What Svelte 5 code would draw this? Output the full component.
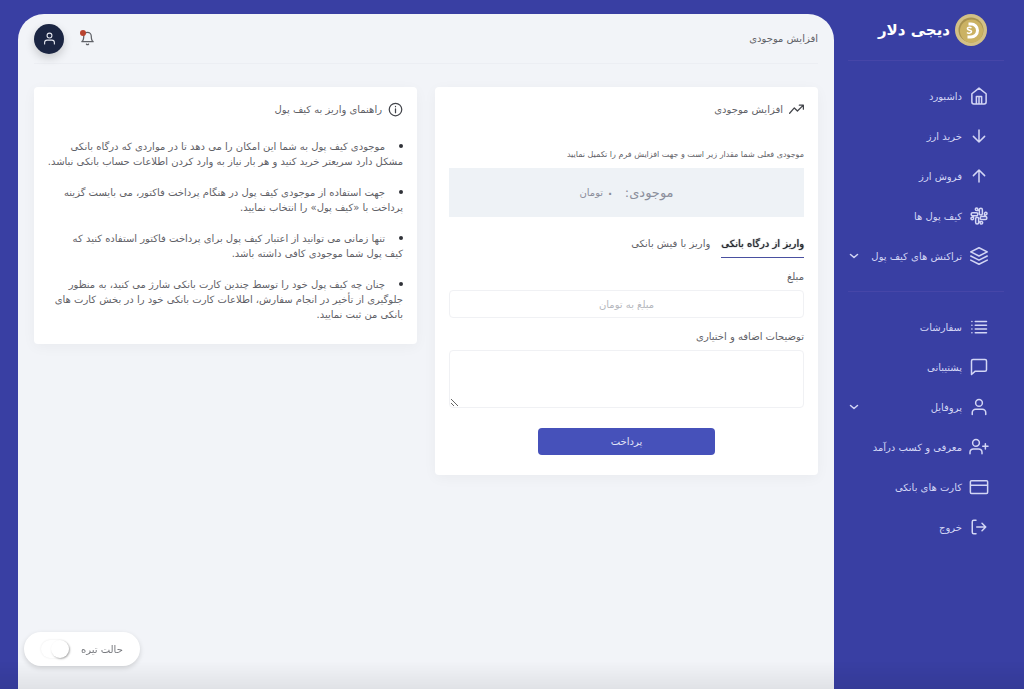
<script lang="ts">
	type Item = { icon: string; label: string; sub?: boolean };

	const walletLinks: Item[] = [
		{ icon: 'home', label: 'داشبورد' },
		{ icon: 'down', label: 'خرید ارز' },
		{ icon: 'up', label: 'فروش ارز' },
		{ icon: 'slack', label: 'کیف پول ها' },
		{ icon: 'layers', label: 'تراکنش های کیف پول', sub: true }
	];

	const accountLinks: Item[] = [
		{ icon: 'list', label: 'سفارشات' },
		{ icon: 'message', label: 'پشتیبانی' },
		{ icon: 'user', label: 'پروفایل', sub: true },
		{ icon: 'userPlus', label: 'معرفی و کسب درآمد' },
		{ icon: 'card', label: 'کارت های بانکی' },
		{ icon: 'logout', label: 'خروج' }
	];

	const paths: Record<string, string> = {
		home: 'M2.5 9 12 1.500 21.500 9V20a2.500 2.500 0 0 1-2.500 2.500H5A2.500 2.500 0 0 1 2.500 20zM8.500 22.500V12.500h7v10M12 13v9',
		down: 'M12 4v16M4.500 12.500l7.500 7.500 7.500-7.500',
		up: 'M12 20V4M4.500 11.500 12 4l7.500 7.500',
		slack:
			'M14.500 10.500a2 2 0 0 1-2-2v-5a2 2 0 0 1 4 0v5a2 2 0 0 1-2 2zM21 10.500h-1.700V8.800A1.700 1.700 0 1 1 21 10.500zM9.500 13.500a2 2 0 0 1 2 2v5a2 2 0 0 1-4 0v-5a2 2 0 0 1 2-2zM3 13.500h1.700v1.700A1.700 1.700 0 1 1 3 13.500zM13.500 14.500a2 2 0 0 1 2-2h5a2 2 0 0 1 0 4h-5a2 2 0 0 1-2-2zM15.200 19.300h-1.700V21a1.700 1.700 0 1 0 1.700-1.700zM10.500 9.500a2 2 0 0 1-2 2h-5a2 2 0 0 1 0-4h5a2 2 0 0 1 2 2zM8.800 4.700h1.700V3a1.700 1.700 0 1 0-1.700 1.700z',
		layers: 'M12 1 1 6.500 12 12l11-5.500zM1 17.500 12 23l11-5.500M1 12l11 5.500L23 12',
		list: 'M7 4.500h15M7 9.500h15M7 14.500h15M7 19.500h15M2.500 4.500h.1M2.500 9.500h.1M2.500 14.500h.1M2.500 19.500h.1',
		message: 'M22 15.500a2 2 0 0 1-2 2H7l-5 4.500V4a2 2 0 0 1 2-2h16a2 2 0 0 1 2 2z',
		user: 'M21 22v-2.500a4.500 4.500 0 0 0-4.500-4.500h-9A4.500 4.500 0 0 0 3 19.500V22M16.500 6.500a4.500 4.500 0 1 1-9 0 4.500 4.500 0 0 1 9 0z',
		userPlus:
			'M16 21v-2a4.500 4.500 0 0 0-4.500-4.500h-7A4.500 4.500 0 0 0 0 19v2M12.500 6.500a4.500 4.500 0 1 1-9 0 4.500 4.500 0 0 1 9 0zM20.500 7.500v7M17 11h7',
		card: 'M2 3.500h20A1.500 1.500 0 0 1 23.500 5v14a1.500 1.500 0 0 1-1.500 1.500H2A1.500 1.500 0 0 1 .5 19V5A1.500 1.500 0 0 1 2 3.500zM.5 9.500h23',
		logout: 'M8 3H5a2 2 0 0 0-2 2v14a2 2 0 0 0 2 2h3M16 17l5-5-5-5M21 12H9',
		chevron: 'm5 9 7 6 7-6',
		bell: 'M18 8A6 6 0 0 0 6 8c0 7-3 9-3 9h18s-3-2-3-9M13.700 21a2 2 0 0 1-3.400 0',
		trend: 'm23 5-9.500 9.500-5-5L1 18M16.500 5H23v6.500',
		info: 'M22 12a10 10 0 1 1-20 0 10 10 0 0 1 20 0zM12 17v-6M12 7.500V7'
	};

	const tips = [
		'موجودی کیف پول به شما این امکان را می دهد تا در مواردی که درگاه بانکی مشکل\u00a0دارد سریعتر خرید کنید و هر بار نیاز به وارد کردن اطلاعات حساب بانکی نباشد.',
		'جهت استفاده از موجودی کیف پول در هنگام پرداخت فاکتور، می بایست گزینه پرداخت\u00a0با «کیف پول» را انتخاب نمایید.',
		'تنها زمانی می توانید از اعتبار کیف پول برای پرداخت فاکتور استفاده کنید که کیف\u00a0پول شما موجودی کافی داشته باشد.',
		'چنان چه کیف پول خود را توسط چندین کارت بانکی شارژ می کنید، به منظور جلوگیری\u00a0از تأخیر در انجام سفارش، اطلاعات کارت بانکی خود را در بخش کارت های بانکی\u00a0من ثبت نمایید.'
	];

	let tab = $state('gateway');
	let amount = $state('');
	let note = $state('');
	let dark = $state(false);
</script>

{#snippet icon(name: string)}
	<svg class="icon" viewBox="0 0 24 24" aria-hidden="true"><path d={paths[name]} /></svg>
{/snippet}

{#snippet menu(items: Item[])}
	<ul class="menu">
		{#each items as item}
			<li>
				<a href="#top">
					{@render icon(item.icon)}
					<span>{item.label}</span>
					{#if item.sub}
						<span class="chevron">{@render icon('chevron')}</span>
					{/if}
				</a>
			</li>
		{/each}
	</ul>
{/snippet}

<div class="app" dir="rtl" lang="fa">
	<aside>
		<a class="brand" href="#top">
			<svg class="coin" viewBox="0 0 32 32" aria-hidden="true">
				<circle cx="16" cy="16" r="16" fill="#d3c086" />
				<circle cx="16" cy="16" r="12.500" fill="#a8924f" />
				<circle cx="16.500" cy="17" r="11.500" fill="#cbb263" />
				<path d="M13.500 10h2.500a6.500 6.500 0 0 1 0 13h-3.500" fill="none" stroke="#fff" stroke-width="3" />
				<path
					d="M16.500 14c-2-1.500-4.500-.5-4 1s4 1 4 2.500-3 2.500-4.500 1"
					fill="none"
					stroke="#fff"
					stroke-width="1.500"
				/>
			</svg>
			<span>دیجی دلار</span>
		</a>
		<nav>
			{@render menu(walletLinks)}
			{@render menu(accountLinks)}
		</nav>
	</aside>

	<main>
		<header>
			<h1>افزایش موجودی</h1>
			<div class="actions">
				<button type="button" class="bell" aria-label="اعلان ها">{@render icon('bell')}</button>
				<button type="button" class="avatar" aria-label="حساب کاربری">{@render icon('user')}</button>
			</div>
		</header>

		<div class="columns">
			<section class="card">
				<h2>{@render icon('trend')} افزایش موجودی</h2>
				<p class="lead">موجودی فعلی شما مقدار زیر است و جهت افزایش فرم را تکمیل نمایید</p>
				<div class="balance">
					<strong>موجودی:</strong>
					<span class="sum"><b>۰</b> تومان</span>
				</div>
				<div class="tabs">
					<button type="button" class:active={tab === 'gateway'} onclick={() => (tab = 'gateway')}>
						واریز از درگاه بانکی
					</button>
					<button type="button" class:active={tab === 'receipt'} onclick={() => (tab = 'receipt')}>
						واریز با فیش بانکی
					</button>
				</div>
				<form onsubmit={(e) => e.preventDefault()}>
					<label for="amount">مبلغ</label>
					<input id="amount" type="text" placeholder="مبلغ به تومان" bind:value={amount} />
					<label for="note">توضیحات اضافه و اختیاری</label>
					<textarea id="note" bind:value={note}></textarea>
					<button type="submit" class="pay">پرداخت</button>
				</form>
			</section>

			<section class="card guide">
				<h2>{@render icon('info')} راهنمای واریز به کیف پول</h2>
				<ul>
					{#each tips as tip}
						<li>{tip}</li>
					{/each}
				</ul>
			</section>
		</div>
	</main>

	<div class="shade"></div>
	<label class="dark-mode">
		<span>حالت تیره</span>
		<input type="checkbox" bind:checked={dark} />
	</label>
</div>

<style>
	:global(body) {
		background: #393fa3;
	}

	.app {
		display: flex;
		min-height: 100vh;
		font-family: 'DejaVu Sans', sans-serif;
		font-size: 10px;
		color: #5f6167;
	}

	.app * {
		box-sizing: border-box;
	}

	button,
	input,
	textarea {
		font: inherit;
		color: inherit;
	}

	button {
		border: 0;
		padding: 0;
		background: none;
		cursor: pointer;
	}

	.icon {
		display: block;
		flex: none;
		width: 18px;
		height: 18px;
		fill: none;
		stroke: currentColor;
		stroke-width: 2;
		stroke-linecap: round;
		stroke-linejoin: round;
		overflow: visible;
	}

	aside {
		flex: none;
		width: 190px;
		padding: 0 20px 0 14px;
		color: #d3d6f5;
	}

	.brand {
		display: flex;
		align-items: center;
		gap: 5px;
		height: 61px;
		padding: 0 17px;
		border-bottom: 1px solid #4646a8;
		color: #fff;
		font-size: 15px;
		font-weight: 700;
		white-space: nowrap;
		text-decoration: none;
	}

	.coin {
		flex: none;
		width: 32px;
		height: 32px;
	}

	.menu {
		list-style: none;
		margin: 0;
		padding: 15px 16px 0 0;
	}

	.menu + .menu {
		margin-top: 15px;
		border-top: 1px solid #4646a8;
	}

	.menu a {
		display: flex;
		align-items: center;
		gap: 8px;
		height: 40px;
		color: inherit;
		text-decoration: none;
		white-space: nowrap;
	}

	.chevron {
		margin-right: auto;
	}

	.chevron .icon {
		width: 12px;
		height: 12px;
		stroke-width: 3;
	}

	main {
		flex: 1;
		min-width: 0;
		margin: 14px 0 0 18px;
		padding: 0 16px;
		border-radius: 26px 26px 0 0;
		background: #f2f4f8;
	}

	header {
		display: flex;
		align-items: center;
		justify-content: space-between;
		height: 50px;
		border-bottom: 1px solid #eceef3;
	}

	h1,
	h2 {
		margin: 0;
		font-size: 10px;
		font-weight: 400;
	}

	.actions {
		display: flex;
		align-items: center;
		gap: 16px;
	}

	.bell {
		position: relative;
	}

	.bell .icon {
		width: 15px;
		height: 15px;
	}

	.bell::after {
		content: '';
		position: absolute;
		top: -1px;
		left: 0;
		width: 6px;
		height: 6px;
		border-radius: 50%;
		background: #b8432f;
	}

	.avatar {
		display: grid;
		place-items: center;
		width: 30px;
		height: 30px;
		border-radius: 50%;
		background: #1b2542;
		color: #e6e8f0;
		box-shadow: 0 4px 10px #0000002e;
	}

	.avatar .icon {
		width: 13px;
		height: 13px;
	}

	.columns {
		display: grid;
		grid-template-columns: 1fr 1fr;
		align-items: start;
		gap: 18px;
		padding-top: 23px;
	}

	.card {
		padding: 14px 14px 20px;
		border-radius: 4px;
		background: #fff;
		box-shadow: 0 3px 14px #0000000a;
	}

	h2 {
		display: flex;
		align-items: center;
		gap: 6px;
		height: 16px;
	}

	h2 .icon {
		width: 15px;
		height: 15px;
		color: #43454b;
	}

	.lead {
		margin: 30px 0 5px;
		font-size: 8px;
		line-height: 16px;
	}

	.balance {
		display: flex;
		align-items: center;
		justify-content: center;
		gap: 10px;
		height: 49px;
		background: #eef2f6;
		color: #8b8e9b;
	}

	.balance strong {
		font-size: 13px;
		font-weight: 400;
	}

	.sum {
		display: flex;
		align-items: center;
		gap: 2px;
	}

	.sum b {
		font-size: 18px;
		font-weight: 400;
		line-height: 16px;
	}

	.tabs {
		display: flex;
		gap: 11px;
		margin-top: 12px;
	}

	.tabs button {
		height: 29px;
		border-bottom: 1px solid transparent;
		white-space: nowrap;
	}

	.tabs .active {
		border-color: #4950a0;
		color: #24262e;
		text-shadow: 0 0 1px #24262e;
	}

	form {
		display: flex;
		flex-direction: column;
	}

	form label {
		margin: 11px 0 5px;
		line-height: 16px;
	}

	form input,
	textarea {
		width: 100%;
		margin: 0;
		border: 1px solid #f0f1f4;
		border-radius: 4px;
		background: #fff;
		outline: 0;
	}

	form input {
		height: 28px;
		text-align: center;
	}

	input::placeholder {
		color: #b5b7bd;
	}

	textarea {
		height: 58px;
		padding: 6px;
		resize: vertical;
	}

	.pay {
		align-self: center;
		width: 50%;
		height: 27px;
		margin-top: 20px;
		border-radius: 4px;
		background: #4651ba;
		color: #e2e4f7;
	}

	.guide {
		padding-left: 8px;
	}

	.guide ul {
		display: grid;
		gap: 15px;
		list-style: inside disc;
		margin: 21px 0 2px;
		padding: 0;
		line-height: 15px;
	}

	.guide li::marker {
		color: #303238;
		font-size: 13px;
	}

	.shade {
		position: fixed;
		right: 0;
		bottom: 0;
		left: 0;
		height: 28px;
		background: linear-gradient(#00000000, #00000012);
		pointer-events: none;
	}

	.dark-mode {
		position: fixed;
		bottom: 23px;
		left: 24px;
		display: flex;
		align-items: center;
		gap: 12px;
		height: 34px;
		padding: 0 17px;
		border-radius: 17px;
		background: #fff;
		box-shadow: 0 2px 5px #00000026;
		color: #77797e;
	}

	.dark-mode input {
		appearance: none;
		display: flex;
		width: 28px;
		height: 18px;
		margin: 0;
		border-radius: 9px;
		box-shadow: 0 0 2px #0000001a;
	}

	.dark-mode input::before {
		content: '';
		width: 18px;
		height: 18px;
		border-radius: 50%;
		background: #fff;
		box-shadow: 1px 1px 2px #0000004d;
	}

	.dark-mode input:checked {
		justify-content: flex-end;
		background: #4651ba;
	}
</style>
